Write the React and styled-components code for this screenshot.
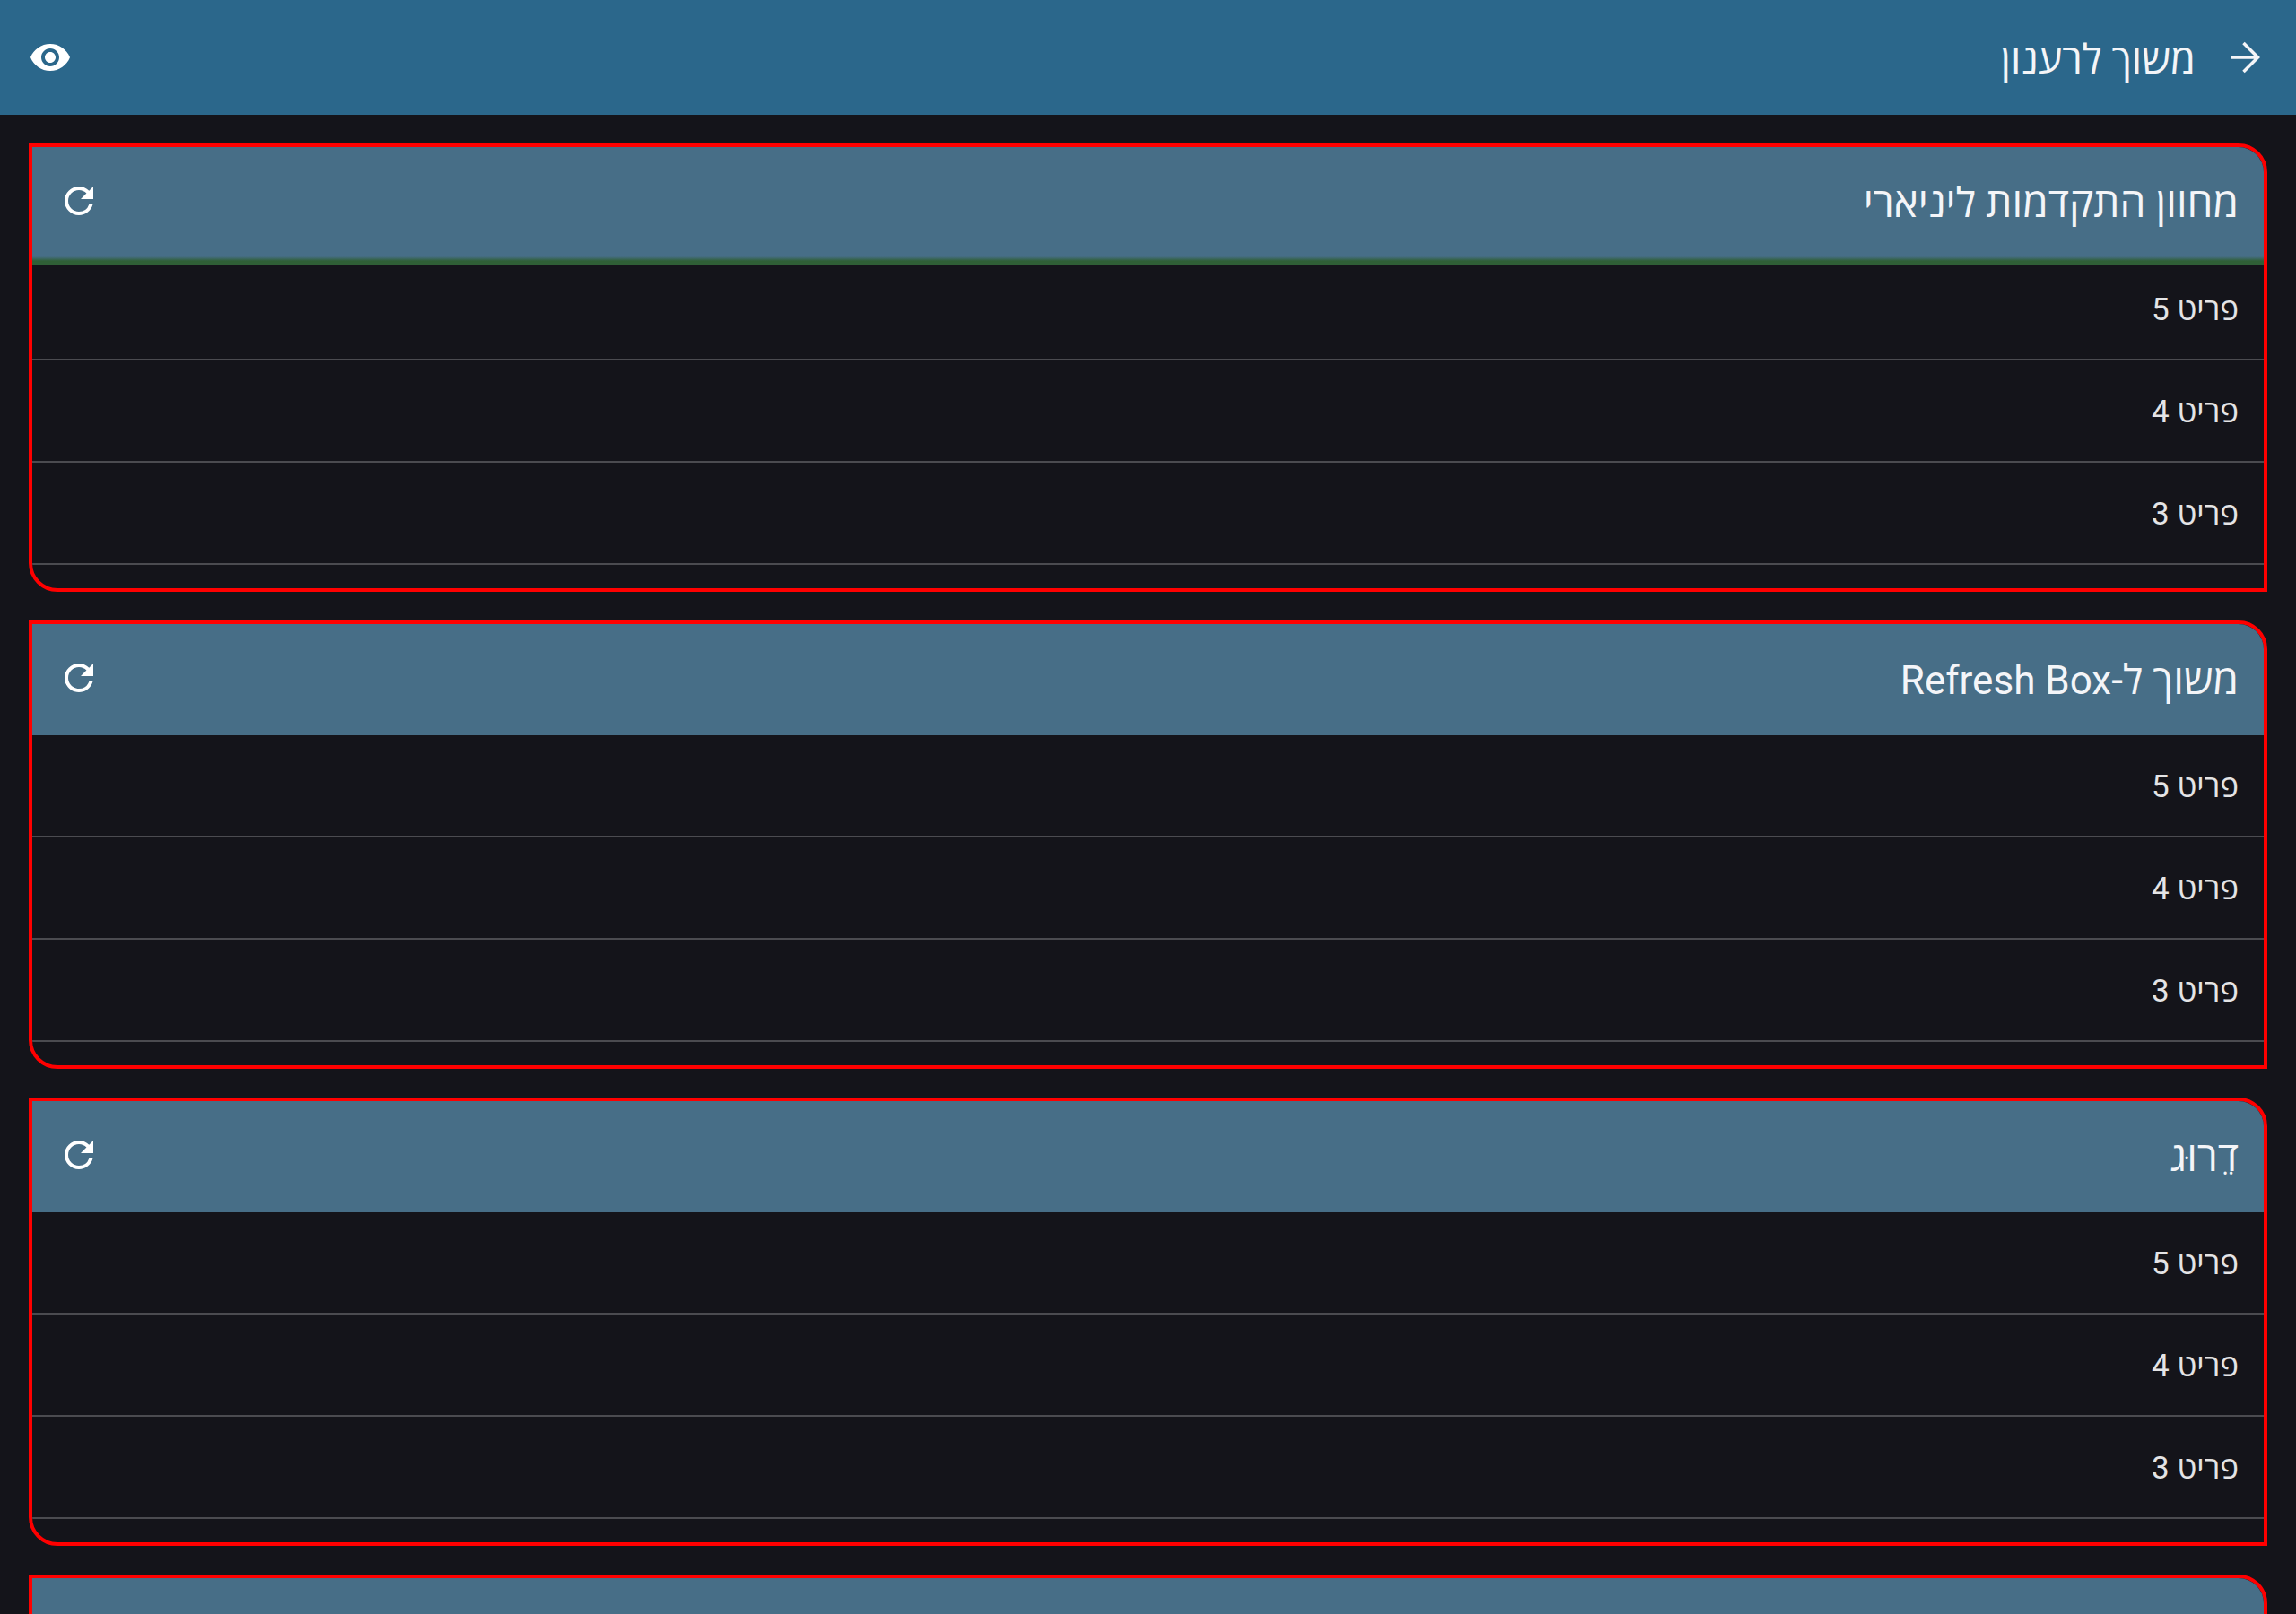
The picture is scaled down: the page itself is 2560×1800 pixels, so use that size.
import React from 'react'
import styled, {createGlobalStyle} from 'styled-components'
import {MdRefresh, MdVisibility} from 'react-icons/md'

const GlobalStyle = createGlobalStyle`
  html, body {
    margin: 0;
    padding: 0;
    background-color: #14141a;
  }
`;

const Page = styled.div`
  display: flex;
  flex-direction: column;
  height: 100vh;
  overflow: hidden;
  direction: rtl;
  background-color: #14141a;
  font-family: Roboto, "Open Sans", "Liberation Sans", sans-serif;
  color: #f4f5f8;
`;

const Toolbar = styled.header`
  display: flex;
  align-items: center;
  flex-shrink: 0;
  height: 128px;
  padding: 0 32px;
  background-color: #2b678b;
`;

const BackIcon = styled.svg`
  width: 48px;
  height: 48px;
  flex-shrink: 0;
  fill: none;
  stroke: #f4f5f8;
  stroke-width: 3.5;
`;

const PageTitle = styled.h1`
  flex: 1;
  margin: 0 32px 0 0;
  font-size: 45px;
  font-weight: 400;
`;

const EyeButton = styled.div`
  display: flex;
  color: #fff;
`;

const Content = styled.main`
  display: flex;
  flex-direction: column;
  flex-shrink: 0;
  gap: 32px;
  padding: 32px;
`;

const Card = styled.section`
  flex-shrink: 0;
  box-sizing: border-box;
  height: 500px;
  overflow: hidden;
  border: 4px solid #ff0000;
  border-radius: 0 32px 0 32px;
`;

const CardHeader = styled.div`
  position: relative;
  display: flex;
  align-items: center;
  justify-content: space-between;
  box-sizing: border-box;
  height: 124px;
  padding: 0 28px;
  background-color: #476e87;
`;

const CardTitle = styled.h2`
  margin: -4px 0 0;
  font-size: 46px;
  font-weight: 400;
`;

const LatinText = styled.span`
  font-size: 44px;
`;

const RefreshButton = styled.div`
  display: flex;
  margin-top: -4px;
  color: #fff;
`;

const ProgressBar = styled.div`
  position: absolute;
  top: calc(100% - 2px);
  right: 0;
  left: 0;
  height: 10px;
  background: linear-gradient(#476e87, #2f5f36 50%);
`;

const Row = styled.div`
  display: flex;
  align-items: center;
  box-sizing: border-box;
  height: 114px;
  padding: 0 28px 2px;
  border-bottom: 2px solid #4b4b50;
  font-size: 35px;
  color: #e4e4e6;
`;

const items = [5, 4, 3];

const cards = [
  {title: 'מחוון התקדמות ליניארי', progress: true, rows: items},
  {title: <>משוך ל-<LatinText>Refresh Box</LatinText></>, rows: items},
  {title: 'דֵרוּג', rows: items},
  {title: '', rows: []},
];

const App = () => {
  return (
    <Page>
      <GlobalStyle />
      <Toolbar>
        <BackIcon viewBox="0 0 48 48">
          <path d="M8 24H37M21.5 8L37.5 24L21.5 40" />
        </BackIcon>
        <PageTitle>משוך לרענון</PageTitle>
        <EyeButton>
          <MdVisibility size={48} />
        </EyeButton>
      </Toolbar>
      <Content>
        {cards.map((card, index) => (
          <Card key={index}>
            <CardHeader>
              <CardTitle>{card.title}</CardTitle>
              <RefreshButton>
                <MdRefresh size={48} />
              </RefreshButton>
              {card.progress && <ProgressBar />}
            </CardHeader>
            {card.rows.map((item) => (
              <Row key={item}>פריט {item}</Row>
            ))}
          </Card>
        ))}
      </Content>
    </Page>
  );
};

export default App;
